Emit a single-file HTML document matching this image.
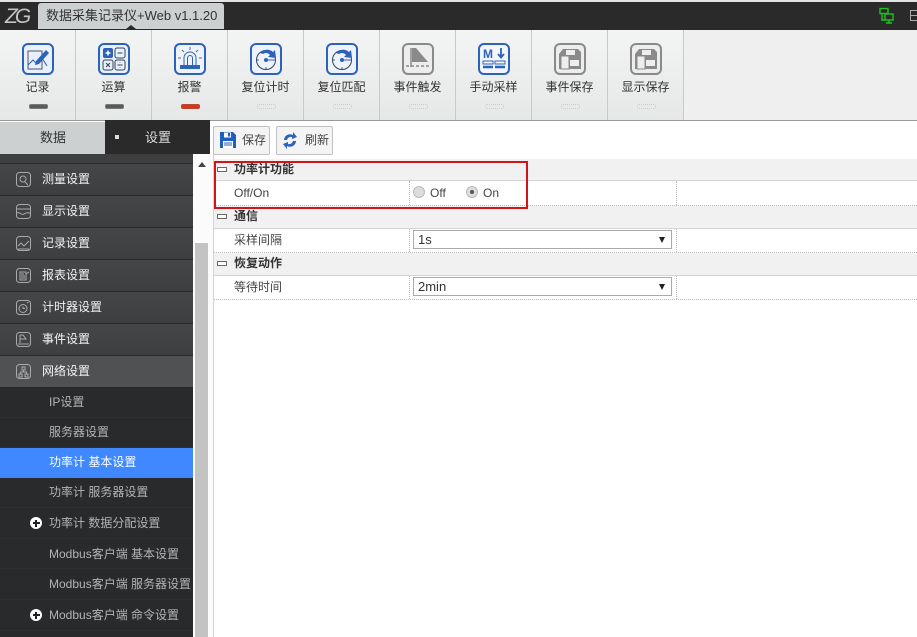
<!DOCTYPE html>
<html><head><meta charset="utf-8">
<style>
*{box-sizing:border-box}
html,body{margin:0;padding:0;width:917px;height:637px;overflow:hidden;background:#fff;font-family:"Liberation Sans","Noto Sans CJK SC",sans-serif;font-size:12px;color:#333}
.a{position:absolute}
.t{position:absolute;white-space:nowrap;line-height:16px}
.tb{position:absolute;top:30px;height:90px;width:76px;border-right:1px solid #c9c9c9;}
.tb .l{position:absolute;left:0;width:75px;top:49px;text-align:center;font-size:12px;line-height:16px;color:#333;white-space:nowrap}
.tb svg{position:absolute;left:22px;top:13px}
.led{position:absolute;left:29px;top:74px;width:19px;height:5px;border-radius:2px;background:#5a5a5a;border:1px solid #777}
.led.off{background:none;border:1px dotted #ccc}
.led.red{background:#e0301e;border:1px solid #b54a30}
.m{position:absolute;left:0;width:193px;height:31px;background:linear-gradient(#454648,#3e3f41);color:#f4f4f4}
.m .x{position:absolute;left:42px;top:7px;line-height:16px;font-size:12px;white-space:nowrap}
.m svg{position:absolute;left:16px;top:8px}
.s{position:absolute;left:0;width:193px;height:30px;background:#292a2b;color:#b4b4b4;border-bottom:1px solid #303030}
.s .x{position:absolute;left:49px;top:6px;line-height:16px;white-space:nowrap}
.plus{position:absolute;left:30px;top:9px;width:12px;height:12px;border-radius:50%;background:#fff}
.plus:before{content:"";position:absolute;left:2.5px;top:5px;width:7px;height:2px;background:#222}
.plus:after{content:"";position:absolute;left:5px;top:2.5px;width:2px;height:7px;background:#222}
.g{position:absolute;left:214px;width:703px;background:#f1f1f1;border-bottom:1px solid #d4d4d4;font-weight:bold;color:#333}
.g i{position:absolute;left:3px;top:8px;width:10px;height:5px;border:1px solid #666;background:#fff}
.g span{position:absolute;left:20px;top:2px;line-height:16px}
.r{position:absolute;left:214px;width:703px;border-bottom:1px dotted #bbb}
.r span{position:absolute;left:20px;top:3px;line-height:16px;color:#444}
.r b{position:absolute;top:0;bottom:0;width:0;border-left:1px dotted #bbb}
.sel{position:absolute;left:413px;width:259px;height:19px;background:#fff;border:1px solid #aaa;font-size:13px;color:#333;padding-left:4px;line-height:17px}
.sel:after{content:"";position:absolute;right:6px;top:6px;border-left:3.5px solid transparent;border-right:3.5px solid transparent;border-top:6px solid #222}
</style></head><body>
<div class="a" style="left:0;top:0;width:917px;height:2px;background:#e4e4e4"></div>
<div class="a" style="left:0;top:2px;width:917px;height:28px;background:#2a2a2a"></div>
<div class="t" style="left:5px;top:7px;color:#c4c4c4;font-size:21px;font-style:italic;letter-spacing:-3px;line-height:20px">ZG</div>
<div class="a" style="left:38px;top:3px;width:186px;height:26px;background:#ccd0d0;border-radius:3px 3px 0 0"></div>
<div class="t" style="left:46px;top:8px;font-size:13px;color:#333">数据采集记录仪+Web v1.1.20</div>
<div class="a" style="left:126px;top:25px;border-left:5px solid transparent;border-right:5px solid transparent;border-bottom:4px solid #2a2a2a"></div>
<svg class="a" style="left:878px;top:7px" width="18" height="18" viewBox="0 0 18 18" fill="none" stroke="#1fc41f" stroke-width="1.4"><rect x="2" y="1.5" width="8" height="5"/><rect x="7" y="7" width="8" height="6"/><path d="M4 7v6h3M8 16h6M11 13v3"/></svg>
<div class="a" style="left:910px;top:10px;width:7px;height:11px;border:1px solid #aaa;border-right:0"></div>
<div class="a" style="left:911px;top:15px;width:6px;height:1px;background:#aaa"></div>

<div class="a" style="left:0;top:30px;width:917px;height:90px;background:linear-gradient(#f3f4f4,#e6e7e7)"></div>
<div class="a" style="left:684px;top:30px;width:233px;height:90px;background:#efefef"></div>
<div class="a" style="left:0;top:120px;width:917px;height:1px;background:#9a9a9a"></div>

<div class="tb" style="left:0"><svg width="32" height="32" viewBox="0 0 32 32" fill="none"><rect x="1" y="1" width="30" height="30" rx="5" fill="#e8f0fb" stroke="#2c62b8" stroke-width="2"/><path d="M6 8h14v18H6z" stroke="#556" stroke-width="1"/><path d="M6 22l5-5 4 4 5-6 5 8" stroke="#2c62b8" stroke-width="1"/><path d="M14 18L24 7l3 3-10 11-4 1z" fill="#2c62b8"/></svg><div class="l">记录</div><div class="led"></div></div>
<div class="tb" style="left:76px"><svg width="32" height="32" viewBox="0 0 32 32" fill="none"><rect x="1" y="1" width="30" height="30" rx="5" fill="#e8f0fb" stroke="#2c62b8" stroke-width="2"/><rect x="5" y="5" width="10" height="10" rx="2" fill="#2c62b8"/><path d="M7.5 10h5M10 7.5v5" stroke="#fff" stroke-width="1.5"/><rect x="17" y="5" width="10" height="10" rx="2" stroke="#345"/><path d="M19.5 10h5" stroke="#345"/><rect x="5" y="17" width="10" height="10" rx="2" stroke="#345"/><path d="M8 20l4 4M12 20l-4 4" stroke="#345"/><rect x="17" y="17" width="10" height="10" rx="2" stroke="#345"/><path d="M19.5 22h5M22 19.5v.5M22 24v.5" stroke="#345"/></svg><div class="l">运算</div><div class="led"></div></div>
<div class="tb" style="left:152px"><svg width="32" height="32" viewBox="0 0 32 32" fill="none"><rect x="1" y="1" width="30" height="30" rx="5" fill="#eef3fb" stroke="#2c62b8" stroke-width="2"/><path d="M10 22v-7a6 6 0 0 1 12 0v7M13.500 22v-7a2.500 2.500 0 0 1 5 0v7" stroke="#2c62b8"/><rect x="6" y="22" width="20" height="4" fill="#2c62b8"/><path d="M16 4v3M8 7l2 2M24 7l-2 2M4 15h3M25 15h3" stroke="#667"/></svg><div class="l">报警</div><div class="led red"></div></div>
<div class="tb" style="left:228px"><svg width="32" height="32" viewBox="0 0 32 32" fill="none"><rect x="1" y="1" width="30" height="30" rx="5" fill="#eef3fb" stroke="#2c62b8" stroke-width="2"/><circle cx="16" cy="17" r="9.500" stroke="#345"/><path d="M10 10a9 9 0 0 1 13-1l2-2 1 8-8-1 2-2a5 5 0 0 0-7-1z" fill="#2c62b8"/><circle cx="16" cy="17" r="2" fill="#2c62b8"/><path d="M16 17l10 0M16 24v2M7 17h2" stroke="#2c62b8"/></svg><div class="l">复位计时</div><div class="led off"></div></div>
<div class="tb" style="left:304px"><svg width="32" height="32" viewBox="0 0 32 32" fill="none"><rect x="1" y="1" width="30" height="30" rx="5" fill="#eef3fb" stroke="#2c62b8" stroke-width="2"/><circle cx="16" cy="17" r="9.500" stroke="#345"/><path d="M10 10a9 9 0 0 1 13-1l2-2 1 8-8-1 2-2a5 5 0 0 0-7-1z" fill="#2c62b8"/><circle cx="16" cy="17" r="2" fill="#2c62b8"/><path d="M16 17l10 0M16 24v2M7 17h2" stroke="#2c62b8"/></svg><div class="l">复位匹配</div><div class="led off"></div></div>
<div class="tb" style="left:380px"><svg width="32" height="32" viewBox="0 0 32 32" fill="none"><rect x="1" y="1" width="30" height="30" rx="5" fill="#ededed" stroke="#8a8a8a" stroke-width="2"/><path d="M9 5v19" stroke="#8a8a8a" stroke-width="1.500"/><path d="M10 5l4 0 12 14H10z" fill="#8a8a8a"/><path d="M4 23h24" stroke="#8a8a8a" stroke-width="1.500" stroke-dasharray="3 2"/></svg><div class="l">事件触发</div><div class="led off"></div></div>
<div class="tb" style="left:456px"><svg width="32" height="32" viewBox="0 0 32 32" fill="none"><rect x="1" y="1" width="30" height="30" rx="5" fill="#f2f6fc" stroke="#2c62b8" stroke-width="2"/><text x="5" y="15" font-family="Liberation Sans" font-weight="bold" font-size="12" fill="#2c62b8">M</text><path d="M23 5v9M20 11l3 3.500 3-3.500" stroke="#2c62b8" stroke-width="1.800"/><path d="M5 18h10v3H5zM17 18h10v3H17z" stroke="#2c62b8"/><path d="M5 24h10M17 24h10" stroke="#2c62b8" stroke-width="2.500"/></svg><div class="l">手动采样</div><div class="led off"></div></div>
<div class="tb" style="left:532px"><svg width="32" height="32" viewBox="0 0 32 32" fill="none"><rect x="1" y="1" width="30" height="30" rx="5" fill="#ededed" stroke="#8a8a8a" stroke-width="2"/><path d="M9 6h15l3 3v17H5V11z" fill="#8a8a8a"/><rect x="12" y="7" width="9" height="5" fill="#eee"/><rect x="16" y="17" width="9" height="6" fill="#eee"/><rect x="7" y="13" width="8" height="13" fill="#eee" stroke="#8a8a8a"/></svg><div class="l">事件保存</div><div class="led off"></div></div>
<div class="tb" style="left:608px"><svg width="32" height="32" viewBox="0 0 32 32" fill="none"><rect x="1" y="1" width="30" height="30" rx="5" fill="#ededed" stroke="#8a8a8a" stroke-width="2"/><path d="M9 6h15l3 3v17H5V11z" fill="#8a8a8a"/><rect x="12" y="7" width="9" height="5" fill="#eee"/><rect x="16" y="17" width="9" height="6" fill="#eee"/><rect x="7" y="13" width="8" height="13" fill="#eee" stroke="#8a8a8a"/></svg><div class="l">显示保存</div><div class="led off"></div></div>

<div class="a" style="left:0;top:122px;width:105px;height:32px;background:#ccd0d1"></div>
<div class="t" style="left:40px;top:130px;font-size:13px;color:#333">数据</div>
<div class="a" style="left:105px;top:120px;width:105px;height:34px;background:#2a2a2a"></div>
<div class="a" style="left:115px;top:135px;width:4px;height:4px;background:#ddd"></div>
<div class="t" style="left:145px;top:130px;font-size:13px;color:#ddd">设置</div>
<div class="a" style="left:0;top:154px;width:193px;height:234px;background:#2a2a2a"></div>
<div class="a" style="left:0;top:154px;width:193px;height:9px;background:#3e3f41"></div>
<div class="a" style="left:193px;top:154px;width:20px;height:483px;background:#fbfbfb"></div>
<div class="a" style="left:198px;top:162px;border-left:4px solid transparent;border-right:4px solid transparent;border-bottom:5px solid #444"></div>
<div class="a" style="left:195px;top:243px;width:13px;height:394px;background:#c3c3c3"></div>
<div class="a" style="left:213px;top:154px;width:1px;height:483px;background:#d4d4d4"></div>

<div class="m" style="top:164px"><svg width="16" height="16" fill="none" stroke="#aaa"><rect x=".5" y=".5" width="14" height="14" rx="3"/><circle cx="7" cy="7" r="3"/><path d="M9 10l3 3"/></svg><div class="x">测量设置</div></div>
<div class="m" style="top:196px"><svg width="16" height="16" fill="none" stroke="#aaa"><rect x=".5" y=".5" width="14" height="14" rx="3"/><path d="M1 5h13M1 9c3-2 4 3 7 1s3-1 6-1"/></svg><div class="x">显示设置</div></div>
<div class="m" style="top:228px"><svg width="16" height="16" fill="none" stroke="#aaa"><rect x=".5" y=".5" width="14" height="14" rx="3"/><path d="M2 10l3-3 3 3 5-5M2 13h11"/></svg><div class="x">记录设置</div></div>
<div class="m" style="top:260px"><svg width="16" height="16" fill="none" stroke="#aaa"><rect x=".5" y=".5" width="14" height="14" rx="3"/><path d="M4 4h6v8H4zM5 6h3M5 8h4M5 10h4M10 6l3-2"/></svg><div class="x">报表设置</div></div>
<div class="m" style="top:292px"><svg width="16" height="16" fill="none" stroke="#aaa"><rect x=".5" y=".5" width="14" height="14" rx="3"/><circle cx="7" cy="8.500" r="4"/><path d="M7 6.500v2h2M11 3l1.500-1"/></svg><div class="x">计时器设置</div></div>
<div class="m" style="top:324px"><svg width="16" height="16" fill="none" stroke="#aaa"><rect x=".5" y=".5" width="14" height="14" rx="3"/><path d="M4 3v8M4 3h3l3 4H4M2 12h11"/></svg><div class="x">事件设置</div></div>
<div class="m" style="top:356px;background:#505153"><svg width="16" height="16" fill="none" stroke="#aaa"><rect x=".5" y=".5" width="14" height="14" rx="3"/><rect x="6" y="3" width="3" height="3"/><rect x="3" y="10" width="3" height="3"/><rect x="9" y="10" width="3" height="3"/><path d="M7.500 6v2M4.500 10V8h6v2"/></svg><div class="x">网络设置</div></div>

<div class="a" style="left:0;top:387px;width:193px;height:250px;background:#292a2b"></div>
<div class="s" style="top:388px"><div class="x">IP设置</div></div>
<div class="s" style="top:418px"><div class="x">服务器设置</div></div>
<div class="s" style="top:448px;height:30px;background:#3f88ff;color:#fff;border:0"><div class="x">功率计 基本设置</div></div>
<div class="s" style="top:478px"><div class="x">功率计 服务器设置</div></div>
<div class="s" style="top:508px;height:31px"><div class="plus"></div><div class="x" style="top:7px">功率计 数据分配设置</div></div>
<div class="s" style="top:539px;height:30px"><div class="x" style="top:7px">Modbus客户端 基本设置</div></div>
<div class="s" style="top:569px;height:31px"><div class="x" style="top:7px">Modbus客户端 服务器设置</div></div>
<div class="s" style="top:600px;height:31px"><div class="plus"></div><div class="x" style="top:7px">Modbus客户端 命令设置</div></div>

<div class="a" style="left:213px;top:126px;width:57px;height:29px;background:#f4f4f4;border:1px solid #c0c0c0;border-radius:2px"></div>
<svg class="a" style="left:219px;top:131px" width="18" height="18" viewBox="0 0 18 18"><path d="M1 1h13l3 3v13H1z" fill="#1f5fbf"/><rect x="5" y="1.500" width="7" height="5" fill="#fff"/><rect x="9" y="2" width="2" height="3.500" fill="#1f5fbf"/><rect x="4" y="10" width="10" height="7" fill="#fff"/><path d="M5 12h8M5 14h8" stroke="#1f5fbf"/></svg>
<div class="t" style="left:242px;top:132px;color:#444">保存</div>
<div class="a" style="left:276px;top:126px;width:57px;height:29px;background:#f4f4f4;border:1px solid #c0c0c0;border-radius:2px"></div>
<svg class="a" style="left:282px;top:131px" width="16" height="19" viewBox="0 0 16 19" fill="none"><path d="M2 9a6 6 0 0 1 9-5V1l4 5-5 2V6a4 4 0 0 0-5 3z" fill="#2a63c0"/><path d="M14 10a6 6 0 0 1-9 5v3l-4-5 5-2v2a4 4 0 0 0 5-3z" fill="#2a63c0"/></svg>
<div class="t" style="left:305px;top:132px;color:#444">刷新</div>

<div class="g" style="top:159px;height:22px"><i></i><span>功率计功能</span></div>
<div class="r" style="top:181px;height:25px"><span style="top:4px">Off/On</span><b style="left:195px"></b><b style="left:462px"></b></div>
<div class="g" style="top:206px;height:23px"><i></i><span>通信</span></div>
<div class="r" style="top:229px;height:24px"><span>采样间隔</span><b style="left:195px"></b><b style="left:462px"></b></div>
<div class="g" style="top:253px;height:23px"><i></i><span>恢复动作</span></div>
<div class="r" style="top:276px;height:24px"><span>等待时间</span><b style="left:195px"></b><b style="left:462px"></b></div>

<div class="a" style="left:413px;top:186px;width:12px;height:12px;border-radius:50%;background:#dcdcdc;border:1px solid #bbb"></div>
<div class="t" style="left:430px;top:185px;color:#444">Off</div>
<div class="a" style="left:466px;top:186px;width:12px;height:12px;border-radius:50%;background:#dcdcdc;border:1px solid #bbb"></div>
<div class="a" style="left:470px;top:190px;width:4px;height:4px;border-radius:50%;background:#555"></div>
<div class="t" style="left:483px;top:185px;color:#444">On</div>

<div class="sel" style="top:230px">1s</div>
<div class="sel" style="top:277px">2min</div>

<div class="a" style="left:214px;top:161px;width:314px;height:48px;border:2px solid #d3131a"></div>
</body></html>
